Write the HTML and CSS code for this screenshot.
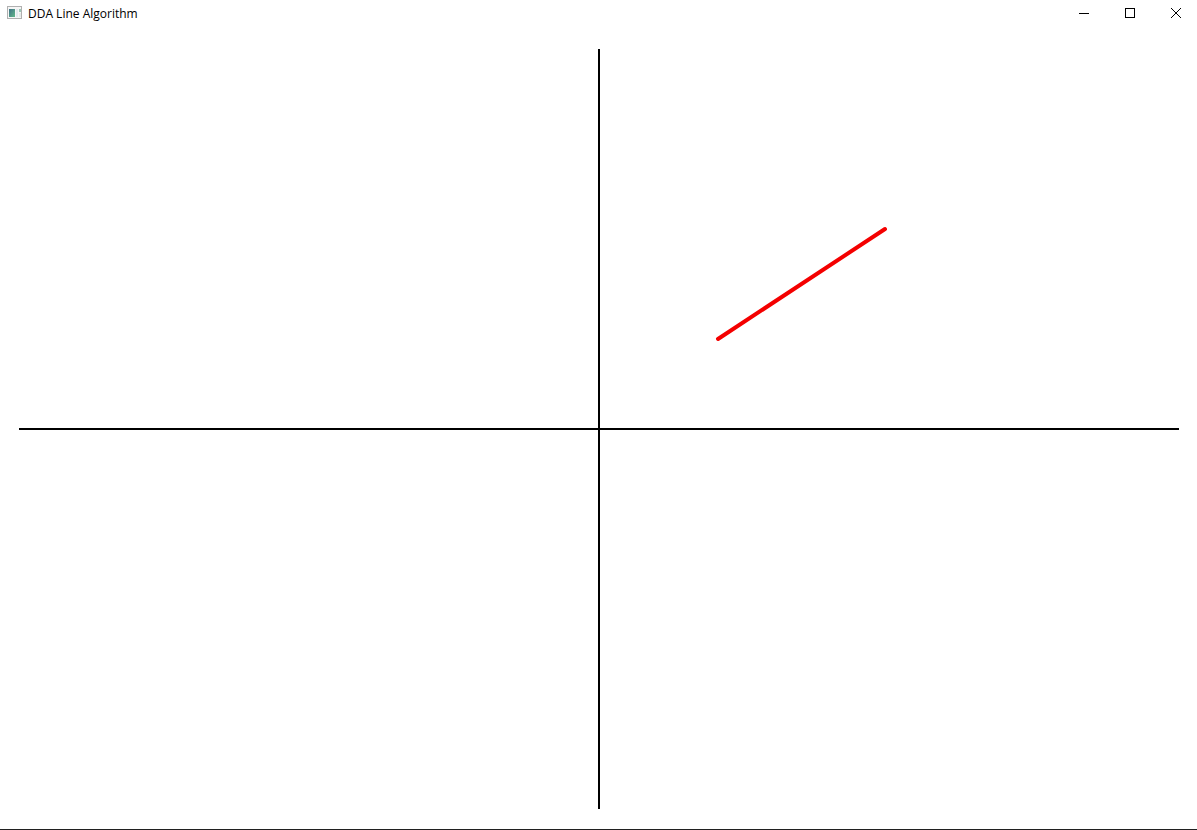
FILE: index.html
```html
<!DOCTYPE html>
<html lang="en">
<head>
<meta charset="utf-8">
<title>DDA Line Algorithm</title>
<link rel="stylesheet" href="styles.css">
</head>
<body>
<div class="window">
  <header class="titlebar">
    <svg class="app-icon" viewBox="0 0 16 14" aria-hidden="true">
      <defs>
        <linearGradient id="pane" x1="0" y1="0" x2="1" y2="1">
          <stop offset="0" stop-color="#3f7186"/>
          <stop offset="1" stop-color="#62b889"/>
        </linearGradient>
      </defs>
      <rect x="0.5" y="0.5" width="14" height="12" fill="#f6f6f6" stroke="#b0b0b0"/>
      <rect x="2" y="3" width="6" height="8" fill="url(#pane)"/>
      <rect x="9" y="3" width="2" height="8" fill="#e3e9ee"/>
      <rect x="12" y="3" width="2" height="3" fill="#9cc8b8"/>
      <rect x="12" y="7" width="2" height="4" fill="#e6ebe9"/>
    </svg>
    <h1 class="title">DDA Line Algorithm</h1>
    <div class="controls">
      <button class="control" type="button" aria-label="Minimize">
        <svg class="glyph" viewBox="0 0 10 10"><path d="M0 5.5H10"/></svg>
      </button>
      <button class="control" type="button" aria-label="Maximize">
        <svg class="glyph" viewBox="0 0 10 10"><path d="M.5 .5H9.5V9.5H.5Z"/></svg>
      </button>
      <button class="control" type="button" aria-label="Close">
        <svg class="glyph smooth" viewBox="0 0 10 10"><path d="M0 0L10 10M10 0L0 10"/></svg>
      </button>
    </div>
  </header>
  <main class="plot">
    <svg class="canvas" viewBox="-580 -380 1160 760" role="img" aria-label="Line segment in the first quadrant">
      <path class="axis" d="M-580 0H580M0 -380V380"/>
      <path class="segment" d="M119 -90L286 -200"/>
    </svg>
  </main>
</div>
</body>
</html>
```
FILE: styles.css
```css
body {
  margin: 0;
  background: #fff;
  color: #000;
  font-family: "Open Sans", "Noto Sans", sans-serif;
}

.window {
  display: flex;
  flex-direction: column;
  box-sizing: border-box;
  height: 100vh;
  border-bottom: 1px solid #202020;
}

.titlebar {
  display: flex;
  align-items: center;
  flex: none;
  height: 29px;
  padding-left: 7px;
}

.app-icon {
  width: 16px;
  height: 14px;
  margin-bottom: 3px;
}

.title {
  margin: 0 0 1px 5px;
  font-size: 12px;
  font-weight: 400;
  line-height: 16px;
  white-space: nowrap;
}

.controls {
  display: flex;
  align-self: stretch;
  margin-left: auto;
}

.control {
  display: flex;
  align-items: center;
  justify-content: center;
  box-sizing: border-box;
  width: 46px;
  padding: 0 0 3px 4px;
  border: 0;
  background: transparent;
}

.control:hover {
  background: #e5e5e5;
}

.glyph {
  width: 10px;
  height: 10px;
  fill: none;
  stroke: #000;
  shape-rendering: crispEdges;
}

.smooth {
  shape-rendering: auto;
}

.plot {
  display: flex;
  flex: 1;
  min-height: 0;
  padding: 20px 18px 20px 19px;
}

.canvas {
  flex: 1;
  min-width: 0;
}

.axis {
  stroke: #000;
  stroke-width: 2;
}

.segment {
  stroke: #f40000;
  stroke-width: 4;
  stroke-linecap: round;
}
```
